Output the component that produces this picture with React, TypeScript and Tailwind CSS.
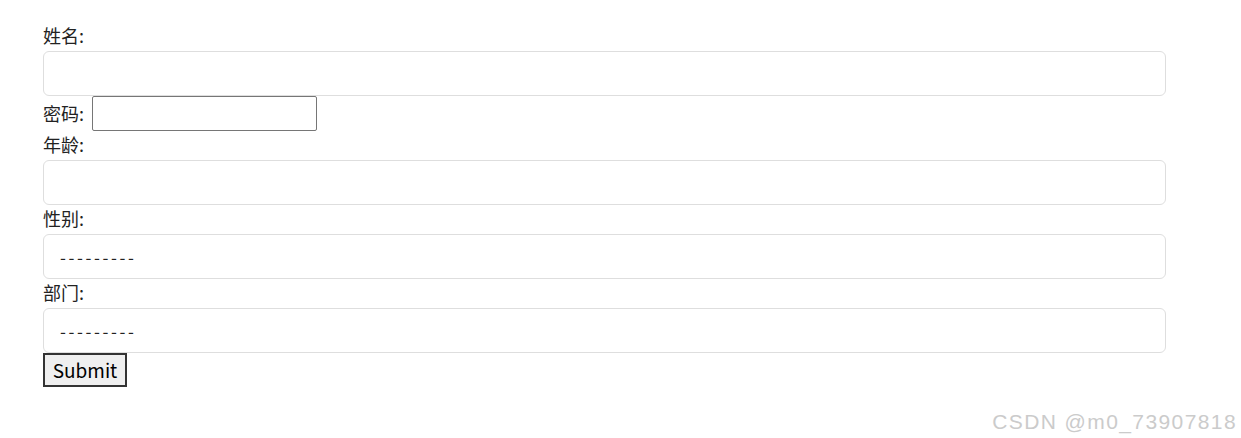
import React from 'react';

const FONT = { fontFamily: '"Noto Sans CJK SC", "Noto Sans", sans-serif' };

function FieldLabel({ text }: { text: string }) {
  return <div className="h-[29px] leading-[27px] text-[18px] text-[#222]">{text}</div>;
}

export default function App() {
  return (
    <div className="relative w-[1241px] h-[438px] bg-white overflow-hidden" style={FONT}>
      <form className="pt-[22px] pl-[43px] w-[1166px]" onSubmit={(e) => e.preventDefault()}>
        {/* 姓名 */}
        <FieldLabel text="姓名:" />
        <input
          type="text"
          className="block w-[1123px] h-[45px] border border-[#dedede] rounded-[6px] outline-none px-4"
        />

        {/* 密码 (unstyled widget) */}
        <div className="flex items-center h-[35px] text-[18px] text-[#222]">
          <span>密码:</span>
          <input
            type="password"
            className="ml-[8px] w-[225px] h-[35px] border border-[#767676] rounded-[2px] outline-none"
          />
        </div>

        {/* 年龄 */}
        <FieldLabel text="年龄:" />
        <input
          type="number"
          className="block w-[1123px] h-[45px] border border-[#dedede] rounded-[6px] outline-none px-4"
        />

        {/* 性别 */}
        <FieldLabel text="性别:" />
        <select className="block w-[1123px] h-[45px] border border-[#dedede] rounded-[6px] outline-none pl-4 appearance-none bg-white text-[17px] tracking-[2.6px] text-[#222]">
          <option>---------</option>
        </select>

        {/* 部门 */}
        <FieldLabel text="部门:" />
        <select className="block w-[1123px] h-[45px] border border-[#dedede] rounded-[6px] outline-none pl-4 appearance-none bg-white text-[17px] tracking-[2.6px] text-[#222]">
          <option>---------</option>
        </select>

        <button
          type="submit"
          className="block w-[84px] h-[34px] pb-[2px] bg-[#efefef] border-2 border-[#333] text-[19px] text-black leading-none"
        >
          Submit
        </button>
      </form>

      <div
        className="absolute right-[4px] top-[406px] text-[21px] tracking-[1.4px] text-[#cbcbcb]"
        style={{ fontFamily: '"Liberation Sans", Arial, sans-serif' }}
      >
        CSDN @m0_73907818
      </div>
    </div>
  );
}
